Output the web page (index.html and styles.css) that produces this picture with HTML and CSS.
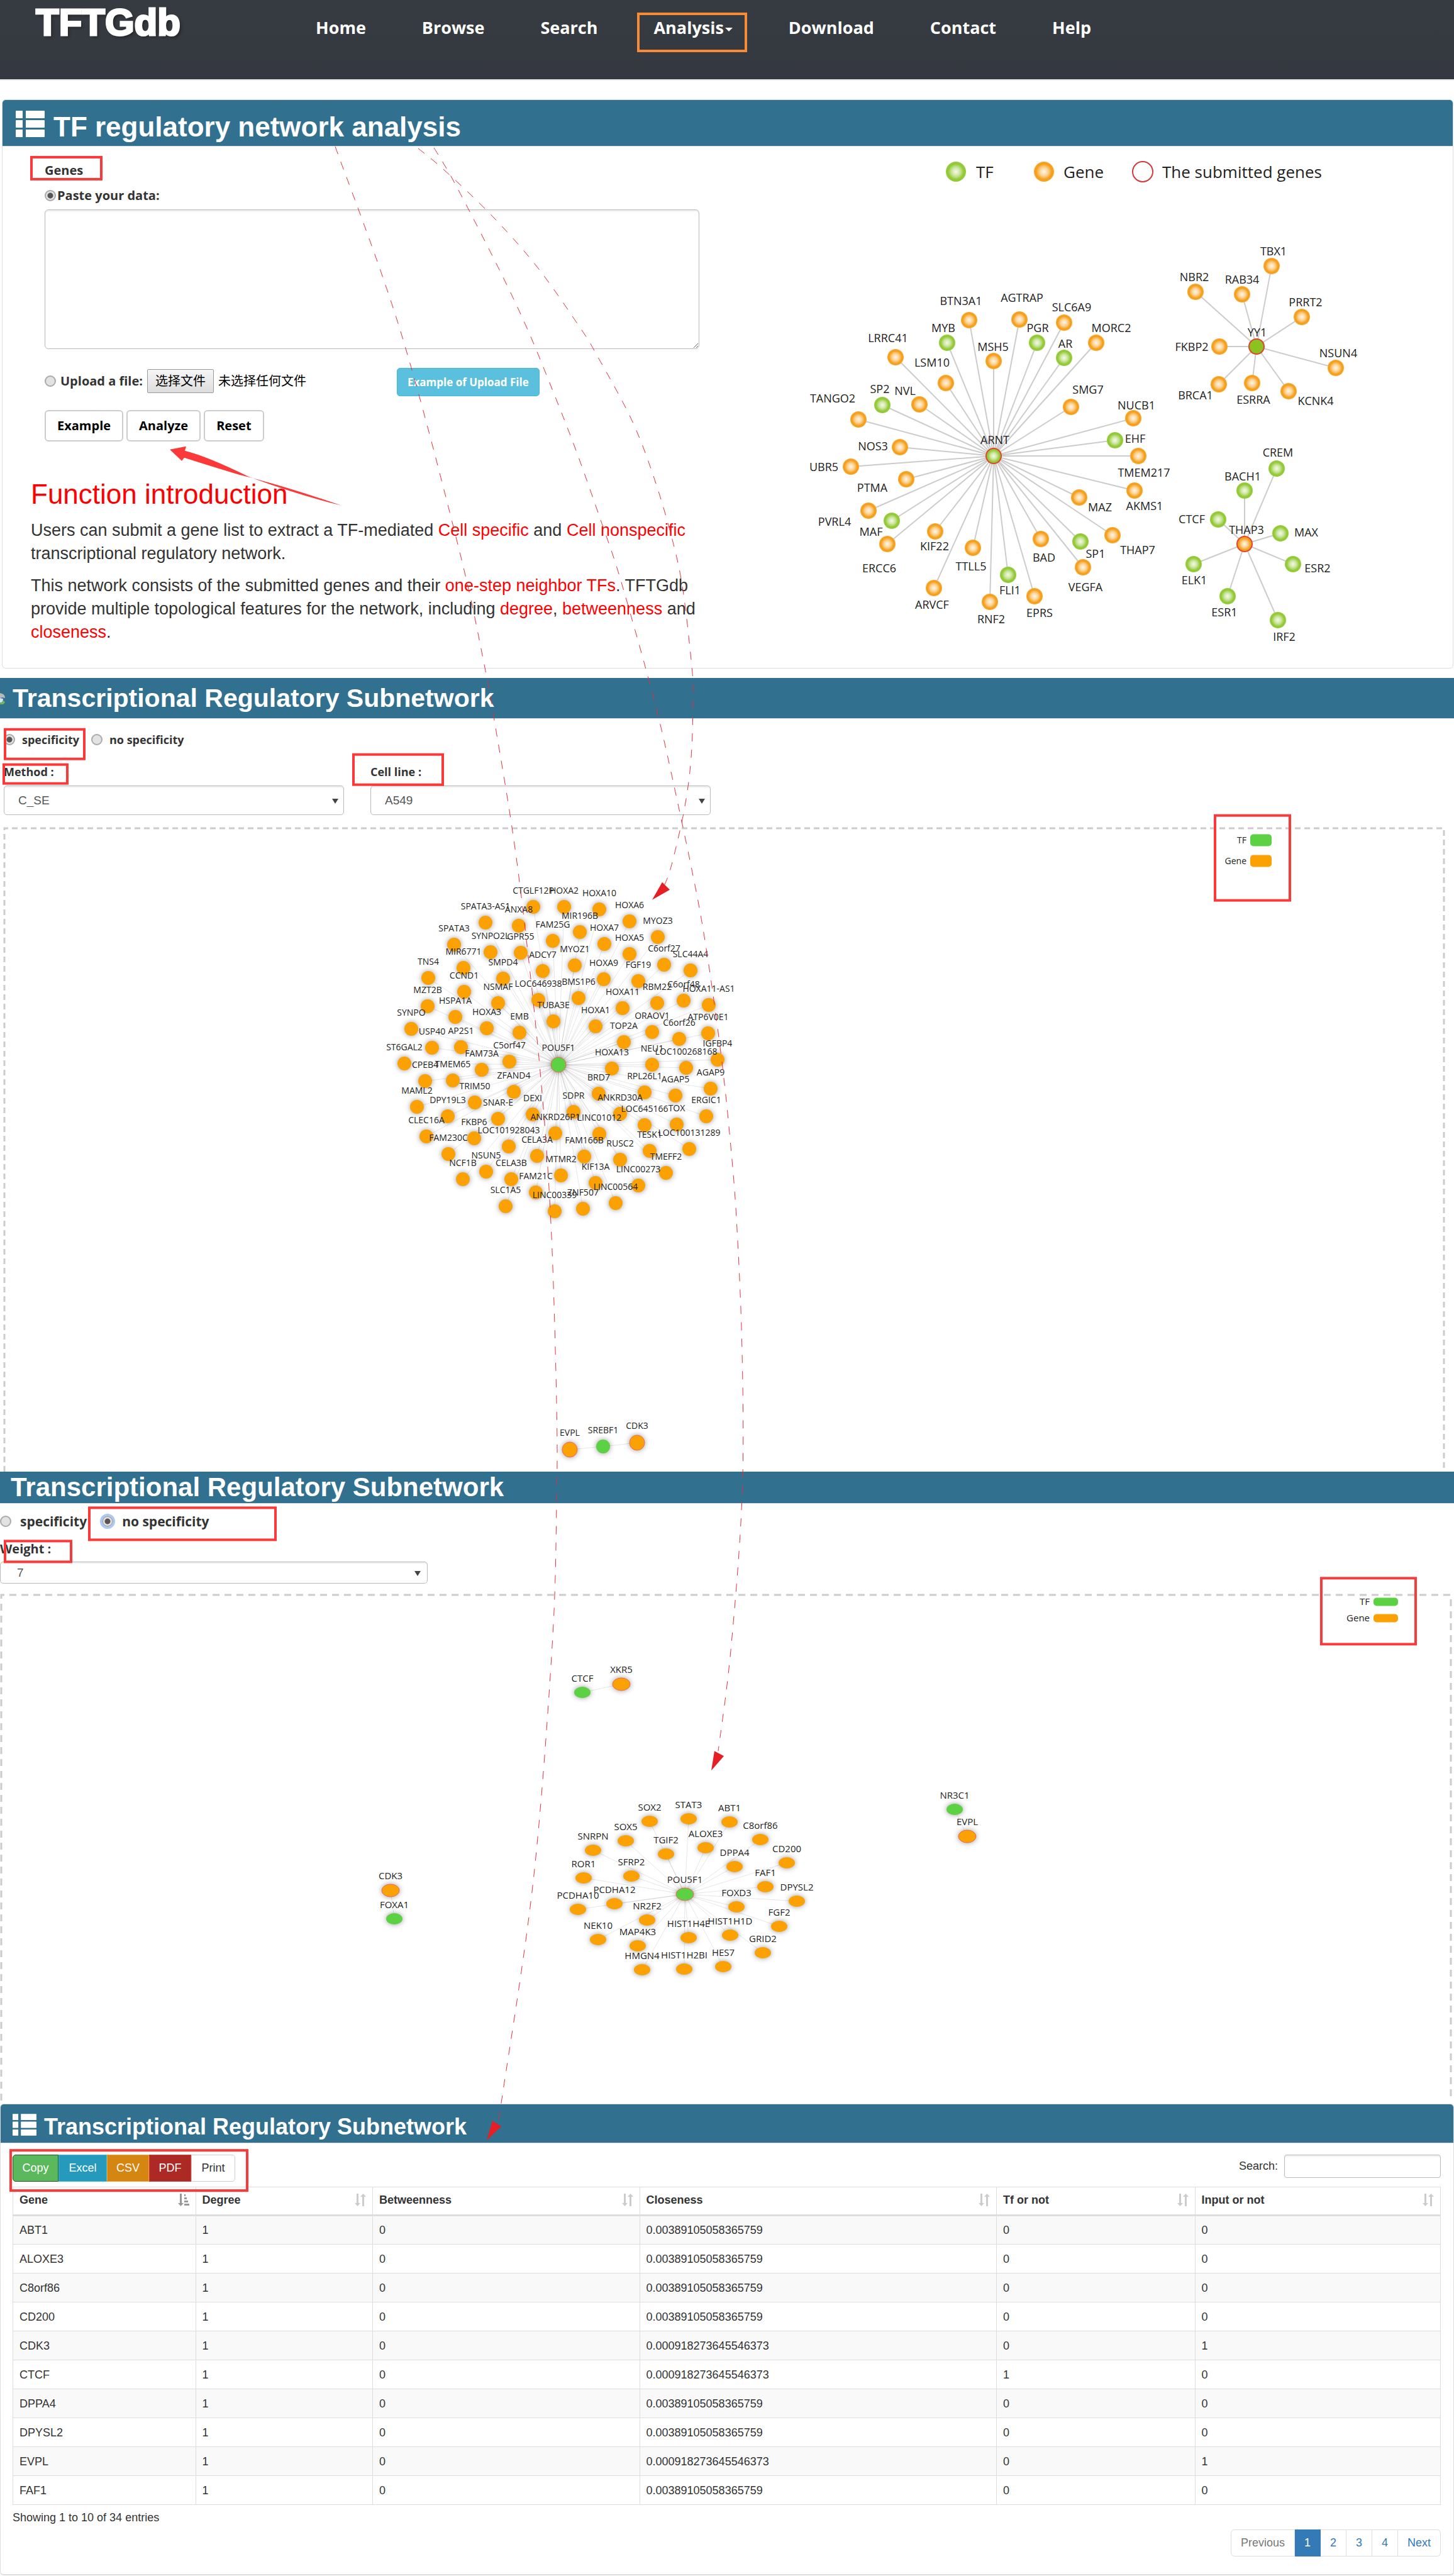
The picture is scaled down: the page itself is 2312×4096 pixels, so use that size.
FILE: index.html
```html
<!DOCTYPE html>
<html lang="en">
<head>
<meta charset="utf-8">
<title>TFTGdb - TF regulatory network analysis</title>
<link rel="stylesheet" href="styles.css">
</head>
<body>
<svg class="sprite" aria-hidden="true">
  <symbol id="icon-list" viewBox="0 0 46 42">
    <path d="M1 0H11V12H1A1 1 0 0 1 0 11V1A1 1 0 0 1 1 0ZM16 0H45A1 1 0 0 1 46 1V11A1 1 0 0 1 45 12H16ZM1 15H11V27H1A1 1 0 0 1 0 26V16A1 1 0 0 1 1 15ZM16 15H45A1 1 0 0 1 46 16V26A1 1 0 0 1 45 27H16ZM1 30H11V42H1A1 1 0 0 1 0 41V31A1 1 0 0 1 1 30ZM16 30H45A1 1 0 0 1 46 31V41A1 1 0 0 1 45 42H16Z"/>
  </symbol>
  <symbol id="icon-sort" viewBox="0 0 18 20">
    <path d="M3 0H6V15H9L4.500 20L0 15H3ZM12 20H15V5H18L13.500 0L9 5H12Z"/>
  </symbol>
  <symbol id="icon-sort-asc" viewBox="0 0 18 20">
    <path d="M3 0H6V15H9L4.500 20L0 15H3ZM10 1H12V4H10ZM10 6H14V9H10ZM10 11H16V14H10ZM10 16H18V19H10Z"/>
  </symbol>
</svg>

<header class="topbar">
  <a class="brand" href="#">TFTGdb</a>
  <nav class="nav">
    <a href="#">Home</a>
    <a href="#">Browse</a>
    <a href="#">Search</a>
    <a class="has-menu" href="#">Analysis</a>
    <a href="#">Download</a>
    <a href="#">Contact</a>
    <a href="#">Help</a>
  </nav>
</header>

<main>
  <section class="panel analysis">
    <h1 class="bar bar-main"><svg class="bar-icon"><use href="#icon-list"/></svg>TF regulatory network analysis</h1>
    <div class="analysis-body">
      <div class="analysis-left">
        <form class="gene-form">
          <label class="genes" for="genes">Genes</label>
          <label class="paste"><input class="radio" type="radio" name="source" checked>Paste your data:</label>
          <textarea id="genes"></textarea>
          <div class="upload">
            <div class="upload-file">
              <input class="radio" type="radio" name="source" id="src-file">
              <label for="src-file">Upload a file:</label>
              <input class="file-input" type="file" id="file">
              <label class="file-button" for="file">选择文件</label>
              <span class="file-name">未选择任何文件</span>
            </div>
            <button class="btn-info" type="button">Example of Upload File</button>
          </div>
          <div class="actions">
            <button type="button">Example</button>
            <button type="button">Analyze</button>
            <button type="reset">Reset</button>
          </div>
        </form>
        <article class="intro">
          <h2>Function introduction</h2>
          <p>Users can submit a gene list to extract a TF-mediated <em>Cell specific</em> and <em>Cell nonspecific</em> transcriptional regulatory network.</p>
          <p>This network consists of the submitted genes and their <em>one-step neighbor TFs</em>. TFTGdb provide multiple topological features for the network, including <em>degree</em>, <em>betweenness</em> and <em>closeness</em>.</p>
        </article>
      </div>
      <svg class="network" id="net-overview" viewBox="1240 233 1070 829">
        <defs>
          <radialGradient id="fill-tf"><stop offset="0" stop-color="#f4fae8"/><stop offset=".4" stop-color="#cfe6a4"/><stop offset=".8" stop-color="#8fc92f"/><stop offset="1" stop-color="#9acd45"/></radialGradient>
          <radialGradient id="fill-gene"><stop offset="0" stop-color="#fff6e6"/><stop offset=".4" stop-color="#fbd59a"/><stop offset=".8" stop-color="#f59c12"/><stop offset="1" stop-color="#f9a935"/></radialGradient>
        </defs>
      </svg>
    </div>
  </section>

  <section class="subnet subnet-specific">
    <h2 class="bar bar-sub"><svg class="bar-sliver" viewBox="0 0 8 20"><path d="M0 2Q8 3 8 10L4 9L0 10Z" fill="#b9b9b9"/><path d="M0 10L5 11L4 18L0 17Z" fill="#d5e2f5"/><path d="M6 14L8 17L5 20L0 20V18Z" fill="#6fb55a"/></svg>Transcriptional Regulatory Subnetwork</h2>
    <form class="filters">
      <div class="radios">
        <label><input class="radio" type="radio" name="mode1" checked>specificity</label>
        <label><input class="radio" type="radio" name="mode1">no specificity</label>
      </div>
      <div class="fields">
        <div class="field">
          <label for="method">Method :</label>
          <div class="select"><select id="method"><option>C_SE</option></select></div>
        </div>
        <div class="field">
          <label for="cell">Cell line :</label>
          <div class="select"><select id="cell"><option>A549</option></select></div>
        </div>
      </div>
    </form>
    <svg class="network" id="net-specific" viewBox="0 1313 2312 1028"></svg>
  </section>

  <section class="subnet subnet-general">
    <h2 class="bar bar-sub">Transcriptional Regulatory Subnetwork</h2>
    <form class="filters">
      <div class="radios">
        <label><input class="radio" type="radio" name="mode2">specificity</label>
        <label><input class="radio focused" type="radio" name="mode2" checked>no specificity</label>
      </div>
      <div class="fields">
        <div class="field">
          <label for="weight">Weight :</label>
          <div class="select"><select id="weight"><option>7</option></select></div>
        </div>
      </div>
    </form>
    <svg class="network" id="net-general" viewBox="0 2533 2312 813"></svg>
  </section>

  <section class="panel results">
    <h2 class="bar bar-table"><svg class="bar-icon"><use href="#icon-list"/></svg>Transcriptional Regulatory Subnetwork</h2>
    <div class="results-body">
      <div class="toolbar">
        <div class="exports">
          <button class="copy" type="button">Copy</button><button class="excel" type="button">Excel</button><button class="csv" type="button">CSV</button><button class="pdf" type="button">PDF</button><button class="print" type="button">Print</button>
        </div>
        <label class="search">Search: <input type="text"></label>
      </div>
      <table>
        <colgroup><col class="c-gene"><col class="c-degree"><col class="c-between"><col class="c-close"><col class="c-tf"><col class="c-input"></colgroup>
        <thead>
          <tr>
            <th class="sorted"><div>Gene<svg><use href="#icon-sort-asc"/></svg></div></th>
            <th><div>Degree<svg><use href="#icon-sort"/></svg></div></th>
            <th><div>Betweenness<svg><use href="#icon-sort"/></svg></div></th>
            <th><div>Closeness<svg><use href="#icon-sort"/></svg></div></th>
            <th><div>Tf or not<svg><use href="#icon-sort"/></svg></div></th>
            <th><div>Input or not<svg><use href="#icon-sort"/></svg></div></th>
          </tr>
        </thead>
        <tbody>
          <tr><td>ABT1</td><td>1</td><td>0</td><td>0.00389105058365759</td><td>0</td><td>0</td></tr>
          <tr><td>ALOXE3</td><td>1</td><td>0</td><td>0.00389105058365759</td><td>0</td><td>0</td></tr>
          <tr><td>C8orf86</td><td>1</td><td>0</td><td>0.00389105058365759</td><td>0</td><td>0</td></tr>
          <tr><td>CD200</td><td>1</td><td>0</td><td>0.00389105058365759</td><td>0</td><td>0</td></tr>
          <tr><td>CDK3</td><td>1</td><td>0</td><td>0.000918273645546373</td><td>0</td><td>1</td></tr>
          <tr><td>CTCF</td><td>1</td><td>0</td><td>0.000918273645546373</td><td>1</td><td>0</td></tr>
          <tr><td>DPPA4</td><td>1</td><td>0</td><td>0.00389105058365759</td><td>0</td><td>0</td></tr>
          <tr><td>DPYSL2</td><td>1</td><td>0</td><td>0.00389105058365759</td><td>0</td><td>0</td></tr>
          <tr><td>EVPL</td><td>1</td><td>0</td><td>0.000918273645546373</td><td>0</td><td>1</td></tr>
          <tr><td>FAF1</td><td>1</td><td>0</td><td>0.00389105058365759</td><td>0</td><td>0</td></tr>
        </tbody>
      </table>
      <p class="summary">Showing 1 to 10 of 34 entries</p>
      <nav class="pages">
        <a class="disabled" href="#">Previous</a><a class="current" href="#">1</a><a href="#">2</a><a href="#">3</a><a href="#">4</a><a href="#">Next</a>
      </nav>
    </div>
  </section>
</main>

<svg class="annotations" id="annotations" viewBox="0 0 2312 4096" preserveAspectRatio="none" aria-hidden="true">
  <g class="boxes">
    <rect class="orange" x="1015" y="22" width="171" height="59"/>
    <rect x="50" y="250" width="111" height="35"/>
    <rect x="8" y="1160" width="126" height="47"/>
    <rect x="6" y="1216" width="101" height="30"/>
    <rect x="562" y="1200" width="142" height="48"/>
    <rect x="1932" y="1297" width="119" height="135"/>
    <rect x="142" y="2398" width="296" height="51"/>
    <rect x="8" y="2451" width="105" height="33"/>
    <rect x="2101" y="2510" width="150" height="105"/>
    <rect x="17" y="3420" width="376" height="64"/>
  </g>
  <path class="pointer" d="M270 715L296 710L294 717Q330 726 395 758Q470 786 543 804Q450 772 380 755Q330 740 293 728L289 733Z"/>
  <g class="heads">
    <path d="M1037 1431L1053 1403L1065 1415Z"/>
    <path d="M1131 2816L1136 2785L1151 2793Z"/>
    <path d="M774 3404L783 3373L797 3382Z"/>
  </g>
</svg>
<script src="network.js"></script>
</body>
</html>
```
FILE: styles.css
```css
* { box-sizing: border-box; }

body {
  margin: 0;
  position: relative;
  background: #fff;
  color: #333;
  font-family: "Liberation Sans", Arial, sans-serif;
  font-size: 18px;
}

h1, h2, p { margin: 0; }
a { text-decoration: none; }
button, input, select, textarea { font: inherit; color: inherit; }
.sprite { position: absolute; width: 0; height: 0; }

/* Top bar */
.topbar {
  display: flex;
  align-items: flex-start;
  height: 128px;
  padding-left: 57px;
  background: linear-gradient(#363b41, #353840);
  border-bottom: 2px solid #e7e7e7;
}
.brand {
  width: 445px;
  color: #fff;
  font-family: Impact, "Liberation Sans Narrow", "Liberation Sans", sans-serif;
  font-weight: 700;
  font-size: 60px;
  line-height: 72px;
  -webkit-text-stroke: 3px #fff;
  text-shadow: 3px 3px 4px #222;
}
.nav { display: flex; gap: 89px; padding-top: 24px; }
.nav a {
  color: #fff;
  font-family: "Open Sans", sans-serif;
  font-weight: 700;
  font-size: 27px;
  line-height: 40px;
}
.has-menu::after {
  content: "";
  display: inline-block;
  margin-left: 2px;
  vertical-align: middle;
  border: 6px solid transparent;
  border-top-color: #fff;
  border-bottom: 0;
}

/* Panels and their title bars */
.panel { border: 1px solid #ddd; border-radius: 6px; overflow: hidden; }
.bar {
  display: flex;
  align-items: center;
  background: #31708f;
  border-bottom: 1px solid #ddd;
  color: #fff;
  font-weight: 700;
}
.bar-icon { fill: #fff; flex: none; }
.bar-main { height: 74px; gap: 14px; padding: 12px 0 0 21px; font-size: 44px; }
.bar-main .bar-icon { width: 46px; height: 42px; margin-bottom: 10px; }
.bar-table { height: 62px; gap: 12px; padding: 11px 0 0 19px; font-size: 36px; }
.bar-table .bar-icon { width: 38px; height: 35px; margin-bottom: 8px; }
.bar-sliver { width: 8px; height: 20px; margin-right: 12px; }

.network { display: block; width: 100%; height: auto; font-family: "Open Sans", sans-serif; }

/* Analysis panel */
.analysis { margin: 30px 1px 0 3px; }
.analysis-body { display: grid; grid-template-columns: 1236fr 1070fr; }
.gene-form {
  padding: 24px 0 0 67px;
  width: 1108px;
  max-width: 100%;
  font-family: "Open Sans", "Noto Sans CJK SC", sans-serif;
  font-size: 20px;
  font-weight: 700;
  line-height: 28px;
}
.genes { display: block; margin-bottom: 12px; }
.paste { display: flex; align-items: center; gap: 2px; margin-bottom: 8px; }
.gene-form textarea {
  display: block;
  width: 100%;
  height: 222px;
  border: 1px solid #bbb;
  border-radius: 6px;
  box-shadow: inset 0 2px 2px rgba(0, 0, 0, .08);
  font-weight: 400;
}
.radio {
  appearance: none;
  flex: none;
  width: 18px;
  height: 18px;
  margin: 0;
  border: 2px solid #aaa;
  border-radius: 50%;
  background: #e2e2e2;
}
.radio:checked { background: radial-gradient(#555 0 4px, #e2e2e2 5px); }
.upload { display: grid; grid-template-columns: 560px auto; justify-content: start; align-items: center; margin-top: 30px; }
.upload-file { display: flex; align-items: center; gap: 7px; margin-bottom: 4px; }
.file-input { position: absolute; width: 1px; height: 1px; opacity: 0; }
.file-button {
  padding: 4px 12px;
  border: 1px solid #999;
  border-radius: 2px;
  background: linear-gradient(#f6f6f6, #ddd);
  color: #000;
  font-weight: 400;
}
.file-name { color: #000; font-weight: 400; }
.btn-info {
  height: 45px;
  padding: 0 16px;
  border: 1px solid #46b8da;
  border-radius: 5px;
  background: #5bc0de;
  color: #fff;
  font-size: 17px;
}
.actions { display: flex; gap: 5px; margin-top: 22px; }
.actions button {
  height: 50px;
  padding: 0 18px;
  border: 2px solid #ccc;
  border-radius: 6px;
  background: #fff;
  color: #000;
}
.intro { width: 1112px; max-width: 100%; padding-left: 45px; }
.intro h2 { margin-top: 59px; color: #f00; font-size: 44px; font-weight: 400; line-height: 50px; }
.intro p { margin-top: 14px; font-size: 27px; line-height: 37px; }
.intro em { color: #f00; font-style: normal; }

/* Subnetwork sections */
.filters { font-family: "Open Sans", sans-serif; font-weight: 700; }
.radios { display: flex; height: 30px; line-height: 30px; }
.radios label { display: flex; align-items: center; }
.fields { display: flex; }
.field label { display: block; line-height: 24px; }
.select { position: relative; }
.select::after {
  content: "";
  position: absolute;
  right: 9px;
  top: calc(50% - 3px);
  border: 5px solid transparent;
  border-top: 8px solid #444;
  border-bottom: 0;
}
.select select {
  appearance: none;
  display: block;
  width: 100%;
  border: 1px solid #bbb;
  border-radius: 5px;
  background: #fff;
  box-shadow: inset 0 2px 2px rgba(0, 0, 0, .08);
  color: #555;
  font: 19px "Liberation Sans", Arial, sans-serif;
}

.subnet-specific { margin-top: 15px; }
.subnet-specific .bar { height: 65px; font-size: 41px; }
.subnet-specific .filters { padding: 18px 0 16px 6px; font-size: 18px; }
.subnet-specific .radios { gap: 19px; }
.subnet-specific .radios label { gap: 11px; }
.subnet-specific .fields { gap: 42px; margin-top: 24px; }
.subnet-specific .field { width: 541px; }
.subnet-specific .select { margin-top: 10px; }
.subnet-specific select { height: 47px; padding: 0 22px; }

.subnet-general .bar { height: 51px; padding-left: 17px; font-size: 42px; }
.subnet-general .filters { padding: 13px 0 14px; font-size: 20px; }
.subnet-general .radios { gap: 24px; font-size: 21px; }
.subnet-general .radios label { gap: 14px; }
.subnet-general .fields { margin-top: 17px; }
.subnet-general .field { width: 680px; }
.subnet-general .select { margin-top: 8px; }
.subnet-general .select::after { right: 11px; }
.subnet-general select { height: 35px; padding: 0 26px; }
.focused { outline: 3px solid #a8c7fa; }

/* Result table */
.results { border-bottom-width: 2px; }
.results-body { padding: 18px 20px 28px 19px; }
.toolbar { display: flex; justify-content: space-between; align-items: flex-start; margin-bottom: 8px; }
.exports { display: flex; }
.exports button { height: 43px; border: 1px solid; padding: 0; color: #fff; }
.exports .copy { width: 73px; background: #5cb85c; border-color: #255625; border-radius: 5px 0 0 5px; }
.exports .excel { width: 77px; background: #269abc; border-color: #46b8da; }
.exports .csv { width: 67px; background: #d58512; border-color: #eea236; }
.exports .pdf { width: 67px; background: #ac2925; border-color: #d43f3a; }
.exports .print { width: 70px; background: #fff; border-color: #ccc; border-radius: 0 5px 5px 0; color: #333; }
.search { display: flex; align-items: center; gap: 10px; }
.search input { width: 249px; height: 37px; border: 1px solid #bbb; border-radius: 4px; box-shadow: inset 0 2px 2px rgba(0, 0, 0, .08); }

table { width: 100%; table-layout: fixed; border-collapse: collapse; border: 1px solid #ddd; }
.c-gene { width: 12.8%; }
.c-degree { width: 12.4%; }
.c-between { width: 18.7%; }
.c-close { width: 25%; }
.c-tf { width: 13.9%; }
.c-input { width: 17.2%; }
th, td { padding: 0 10px; border: 1px solid #ddd; text-align: left; line-height: 24px; }
th { height: 45px; padding-bottom: 4px; border-bottom: 3px solid #ddd; }
td { height: 46px; }
tbody tr:nth-child(odd) { background: #f9f9f9; }
th div { display: flex; justify-content: space-between; align-items: center; }
th svg { width: 18px; height: 20px; fill: #ccc; }
th.sorted svg { fill: #999; }
.summary { margin-top: 8px; line-height: 24px; }
.pages { display: flex; justify-content: flex-end; margin-top: 7px; line-height: 41px; }
.pages a { border: 1px solid #ddd; border-left-width: 0; padding: 0 15px; color: #337ab7; }
.pages a:first-child { border-left-width: 1px; border-radius: 6px 0 0 6px; }
.pages a:last-child { border-radius: 0 6px 6px 0; }
.pages .disabled { color: #777; }
.pages .current { background: #337ab7; border-color: #337ab7; color: #fff; }

/* Network drawings */
.edge-strong { stroke: #ccc; stroke-width: 2; }
.edge { stroke: #000; stroke-opacity: .1; stroke-width: 1; }
.nodes { filter: drop-shadow(0 0 4px rgba(0, 0, 0, .4)); }
.tf { fill: #5bd143; }
.gene { fill: #fca104; }
.submitted { stroke: #ee6a50; stroke-width: 1; }
.frame { fill: none; stroke: #ccc; stroke-width: 3; }
.network text { text-anchor: middle; fill: #222; }
.network text.start { text-anchor: start; }
.network text.end { text-anchor: end; }
.t14 { font-size: 14px; }
.t15 { font-size: 15px; }
.t18 { font-size: 18px; }
.t26 { font-size: 26px; }

/* Guide arrows and highlight boxes over the page */
.annotations { position: absolute; left: 0; top: 0; width: 100%; height: 100%; pointer-events: none; }
.boxes rect { fill: none; stroke: #fb3938; stroke-width: 4; }
.boxes .orange { stroke: #f98a36; }
.pointer { fill: #fb3938; }
.heads { fill: #e61e25; }
.guide { fill: none; stroke: #e0303c; stroke-width: 1; stroke-dasharray: 13 13; }
```
FILE: network.js
```js
const NS = 'http://www.w3.org/2000/svg';

function add(parent, tag, attrs, text) {
  const el = document.createElementNS(NS, tag);
  for (const key in attrs) el.setAttribute(key, attrs[key]);
  if (text) el.textContent = text;
  parent.appendChild(el);
  return el;
}

// Each grid maps data units to drawing units: origin x, origin y, step x, step y.
const mapper = ([ox, oy, sx, sy]) => (x, y) => [Math.round(ox + x * sx), Math.round(oy + y * sy)];

/* Overview network: name, label x, label y, node x, node y, kind */
const hubs = [
  ['ARNT', 500, 771, 497, 832, 'tf', [
    ['AGTRAP', 563, 249, 557, 330], ['BTN3A1', 421, 260, 440, 331], ['SLC6A9', 679, 284, 662, 341],
    ['MORC2', 771, 359, 736, 414], ['PGR', 600, 359, 598, 414, 'tf'], ['MYB', 381, 359, 390, 415, 'tf'],
    ['LRRC41', 252, 397, 269, 467], ['AR', 664, 417, 662, 471, 'tf'], ['MSH5', 496, 428, 498, 483],
    ['LSM10', 354, 487, 387, 562], ['SMG7', 717, 587, 678, 650], ['SP2', 233, 583, 238, 643, 'tf'],
    ['NVL', 292, 591, 325, 641], ['TANGO2', 123, 619, 183, 696], ['NUCB1', 829, 644, 823, 693],
    ['EHF', 827, 767, 780, 774, 'tf'], ['NOS3', 217, 794, 279, 798], ['UBR5', 102, 870, 166, 870],
    ['TMEM217', 847, 892, 834, 832], ['PTMA', 216, 946, 295, 917], ['AKMS1', 849, 1014, 825, 957],
    ['MAZ', 745, 1018, 696, 983], ['PVRL4', 128, 1071, 206, 1033], ['MAF', 212, 1109, 261, 1070, 'tf'],
    ['ERCC6', 231, 1243, 251, 1154], ['KIF22', 360, 1162, 361, 1108], ['TTLL5', 445, 1235, 449, 1169],
    ['ARVCF', 354, 1375, 359, 1317], ['RNF2', 492, 1429, 489, 1367], ['FLI1', 536, 1323, 531, 1268, 'tf'],
    ['EPRS', 604, 1406, 593, 1347], ['BAD', 615, 1204, 607, 1136], ['SP1', 734, 1189, 700, 1145, 'tf'],
    ['VEGFA', 711, 1311, 706, 1239], ['THAP7', 832, 1174, 774, 1122]]],
  ['YY1', 1110, 375, 1109, 428, 'solid', [
    ['TBX1', 1148, 77, 1144, 134], ['NBR2', 964, 173, 967, 228], ['RAB34', 1075, 181, 1075, 236],
    ['PRRT2', 1223, 264, 1215, 321], ['FKBP2', 958, 428, 1022, 428], ['NSUN4', 1299, 451, 1293, 508],
    ['BRCA1', 967, 606, 1021, 567], ['ESRRA', 1101, 622, 1099, 562], ['KCNK4', 1247, 627, 1183, 593]]],
  ['THAP3', 1085, 1102, 1081, 1155, 'gene', [
    ['CREM', 1159, 816, 1156, 877, 'tf'], ['BACH1', 1077, 904, 1081, 959, 'tf'], ['CTCF', 959, 1062, 1020, 1065, 'tf'],
    ['MAX', 1224, 1110, 1165, 1114, 'tf'], ['ESR2', 1251, 1242, 1194, 1228, 'tf'], ['ELK1', 964, 1285, 963, 1228, 'tf'],
    ['ESR1', 1034, 1405, 1042, 1346, 'tf'], ['IRF2', 1173, 1493, 1159, 1434, 'tf']]]
];

const fills = { tf: 'url(#fill-tf)', gene: 'url(#fill-gene)', solid: '#8cc220' };

function drawOverview() {
  const svg = document.getElementById('net-overview');
  const at = mapper([1239.8, 365.4, 0.6837, 0.4328]);
  const edges = add(svg, 'g', { class: 'edge-strong' });
  const nodes = add(svg, 'g', {});
  const labels = add(svg, 'g', { class: 't18' });
  for (const [name, lx, ly, hx, hy, kind, leaves] of hubs) {
    const [cx, cy] = at(hx, hy);
    for (const [leaf, tx, ty, x, y, type] of leaves) {
      const [nx, ny] = at(x, y);
      add(edges, 'line', { x1: cx, y1: cy, x2: nx, y2: ny });
      add(nodes, 'circle', { cx: nx, cy: ny, r: 13, fill: fills[type || 'gene'] });
      const [px, py] = at(tx, ty);
      add(labels, 'text', { x: px, y: py + 7 }, leaf);
    }
    add(nodes, 'circle', { cx, cy, r: 12, fill: fills[kind], stroke: '#e0442e', 'stroke-width': 2 });
    const [px, py] = at(lx, ly);
    add(labels, 'text', { x: px, y: py + 7 }, name);
  }
  add(svg, 'circle', { cx: 1520, cy: 273, r: 16, fill: fills.tf });
  add(svg, 'circle', { cx: 1660, cy: 273, r: 16, fill: fills.gene });
  add(svg, 'circle', { cx: 1817, cy: 273, r: 16, fill: '#fff', stroke: '#d2383c', 'stroke-width': 2 });
  const legend = add(svg, 'g', { class: 't26' });
  add(legend, 'text', { class: 'start', x: 1552, y: 283 }, 'TF');
  add(legend, 'text', { class: 'start', x: 1691, y: 283 }, 'Gene');
  add(legend, 'text', { class: 'start', x: 1848, y: 283 }, 'The submitted genes');
}

/* Star-shaped subnetworks: "NAME x y" lists around one hub */
const parse = (list, shift) => list.split(',').map(item => {
  const [name, x, y] = item.trim().split(' ');
  return [name, +x + (shift || 0), +y];
});

const specific = parse(`CTGLF12P 1080 147, HOXA2 1303 147, SPATA3-AS1 731 217, ANXA8 971 233, FAM25G 1219 299,
SPATA3 500 317, SYNPO2L 766 350, GPR55 986 353, ADCY7 1149 432, MIR6771 567 418, TNS4 311 465, SMPD4 859 467,
CCND1 571 525, NSMAF 820 577, LOC646938 1116 562, MZT2B 305 590, HSPA1A 509 638, HOXA3 738 689, EMB 979 706,
TUBA3E 1227 656, SYNPO 185 690, AP2S1 548 771, USP40 340 775, C5orf47 906 835, ST6GAL2 135 843, FAM73A 701 871,
CPEB4 286 921, TMEM65 489 920, ZFAND4 937 970, TRIM50 649 1016, MAML2 226 1037, DEXI 1075 1070, SNAR-E 823 1091,
DPY19L3 453 1079, CLEC16A 298 1168, FKBP6 645 1177, ANKRD26P1 1240 1155, LOC101928043 899 1213, FAM230C 458 1246,
CELA3A 1104 1256, NSUN5 735 1325, NCF1B 562 1359, CELA3B 917 1358, MTMR2 1283 1342, FAM21C 1095 1417,
SLC1A5 875 1478, LINC00339 1235 1500`).concat(parse(`HOXA10 241 159, HOXA6 463 213, MIR196B 98 259, MYOZ3 667 283,
HOXA7 277 314, HOXA5 462 357, MYOZ1 63 409, C6orf27 717 405, SLC44A4 907 431, HOXA9 275 471, FGF19 527 477,
BMS1P6 91 554, C6orf48 858 565, HOXA11 411 598, HOXA11-AS1 1043 584, RBM22 663 575, HOXA1 213 679, ORAOV1 628 704,
ATP6V0E1 1037 711, C6orf26 825 734, TOP2A 420 750, IGFBP4 1106 827, NEU1 629 849, LOC100268168 876 864,
HOXA13 333 867, AGAP9 1055 955, BRD7 239 977, RPL26L1 572 973, AGAP5 796 986, ERGIC1 1021 1080, SDPR 55 1060,
ANKRD30A 393 1069, TOX 809 1114, LOC645166 573 1119, LINC01012 241 1158, LOC100131289 898 1223, TESK1 609 1233,
FAM166B 131 1258, RUSC2 393 1272, TMEFF2 729 1331, KIF13A 213 1374, LINC00273 526 1386, LINC00564 363 1463,
ZNF507 123 1489`, 1320));

const general = parse(`SOX2 593 774, STAT3 791 762, ABT1 999 777, SOX5 471 862, TGIF2 674 921, ALOXE3 877 894,
C8orf86 1157 857, SNRPN 305 905, SFRP2 499 1020, DPPA4 1023 978, CD200 1289 962, ROR1 256 1029, FAF1 1180 1067,
DPYSL2 1342 1133, PCDHA12 412 1145, PCDHA10 226 1170, FOXD3 1035 1158, NR2F2 580 1218, FGF2 1252 1247,
HIST1H1D 1003 1287, HIST1H4E 791 1298, NEK10 329 1305, MAP4K3 532 1333, GRID2 1168 1364, HMGN4 553 1440,
HIST1H2BI 769 1438, HES7 966 1427`);

function drawSubnet(id, opt) {
  const svg = document.getElementById(id);
  const at = mapper(opt.grid);
  const { rx, ry, rise, size } = opt;
  add(svg, 'path', { class: 'frame', d: opt.frame, 'stroke-dasharray': opt.dash });
  const edges = add(svg, 'g', { class: 'edge' });
  const nodes = add(svg, 'g', { class: 'nodes' });
  const labels = add(svg, 'g', { class: size });
  const node = (name, x, y, kind, grow) => {
    add(nodes, 'ellipse', { class: kind, cx: x, cy: y, rx: rx + grow, ry: ry + grow });
    add(labels, 'text', { x, y: y - rise - grow }, name);
  };
  const [hx, hy] = at(...opt.hub);
  for (const [name, x, y] of opt.leaves) {
    const [nx, ny] = at(x, y);
    add(edges, 'line', { x1: hx, y1: hy, x2: nx, y2: ny });
    node(name, nx, ny, 'gene', 0);
  }
  node('POU5F1', hx, hy, 'tf submitted', 1);
  for (const group of opt.small) {
    group.slice(1).forEach(n => add(edges, 'line', { x1: group[0][1], y1: group[0][2], x2: n[1], y2: n[2] }));
    group.forEach(n => node(...n));
  }
  opt.legend.forEach(([name, kind, x, y, w, h]) => {
    add(svg, 'rect', { class: kind, x, y: y - h / 2, width: w, height: h, rx: 5 });
    add(svg, 'text', { class: 'end ' + size, x: x - 6, y: y + 5 }, name);
  });
}

drawOverview();

drawSubnet('net-specific', {
  grid: [613.4, 1389.9, 0.2175, 0.3579], rx: 11, ry: 11, rise: 21, size: 't14',
  hub: [1262, 849], leaves: specific,
  frame: 'M7 2341V1318H2296V2341', dash: '9 6',
  small: [[['SREBF1', 959, 2301, 'tf', 0], ['EVPL', 906, 2306, 'gene submitted', 1], ['CDK3', 1013, 2295, 'gene submitted', 1]]],
  legend: [['TF', 'tf', 1988, 1337, 34, 19], ['Gene', 'gene', 1988, 1370, 34, 19]]
});

drawSubnet('net-general', {
  grid: [848.3, 2623.2, 0.3121, 0.3537], rx: 13, ry: 9, rise: 17, size: 't15',
  hub: [772, 1101], leaves: general,
  frame: 'M2 3341V2537H2307V3341', dash: '11 8',
  small: [
    [['CTCF', 926, 2692, 'tf', 0], ['XKR5', 988, 2679, 'gene submitted', 1]],
    [['FOXA1', 627, 3052, 'tf', 0], ['CDK3', 621, 3007, 'gene submitted', 1]],
    [['NR3C1', 1518, 2878, 'tf', 0], ['EVPL', 1538, 2921, 'gene submitted', 1]]
  ],
  legend: [['TF', 'tf', 2184, 2548, 39, 13], ['Gene', 'gene', 2184, 2574, 39, 13]]
});

/* Guides: smooth dashed curves through the listed points */
const guides = [
  [[533, 233], [636, 524], [730, 874], [772, 1067], [787, 1151], [823, 1379], [858, 1694], [876, 1946], [885, 2232], [885, 2392], [878, 2618], [848, 2991], [798, 3338], [792, 3371]],
  [[665, 236], [707, 271], [784, 345], [856, 427], [925, 525], [948, 563], [1004, 667], [1040, 760], [1069, 858], [1086, 939], [1100, 1060], [1102, 1107], [1099, 1205], [1088, 1288], [1068, 1375], [1057, 1407]],
  [[690, 235], [724, 293], [792, 425], [838, 522], [880, 624], [918, 722], [954, 824], [981, 903], [1010, 1003], [1031, 1079], [1051, 1157], [1071, 1246], [1099, 1378], [1117, 1472], [1134, 1583], [1149, 1698], [1160, 1802], [1171, 1938], [1180, 2150], [1180, 2380], [1162, 2625], [1142, 2785]]
];

const overlay = document.getElementById('annotations');
for (const p of guides) {
  let d = `M${p[0]}`;
  for (let i = 0; i < p.length - 1; i++) {
    const a = p[Math.max(i - 1, 0)], b = p[i], c = p[i + 1], e = p[Math.min(i + 2, p.length - 1)];
    d += `C${b[0] + (c[0] - a[0]) / 6} ${b[1] + (c[1] - a[1]) / 6} ${c[0] - (e[0] - b[0]) / 6} ${c[1] - (e[1] - b[1]) / 6} ${c}`;
  }
  add(overlay, 'path', { class: 'guide', d });
}
```
